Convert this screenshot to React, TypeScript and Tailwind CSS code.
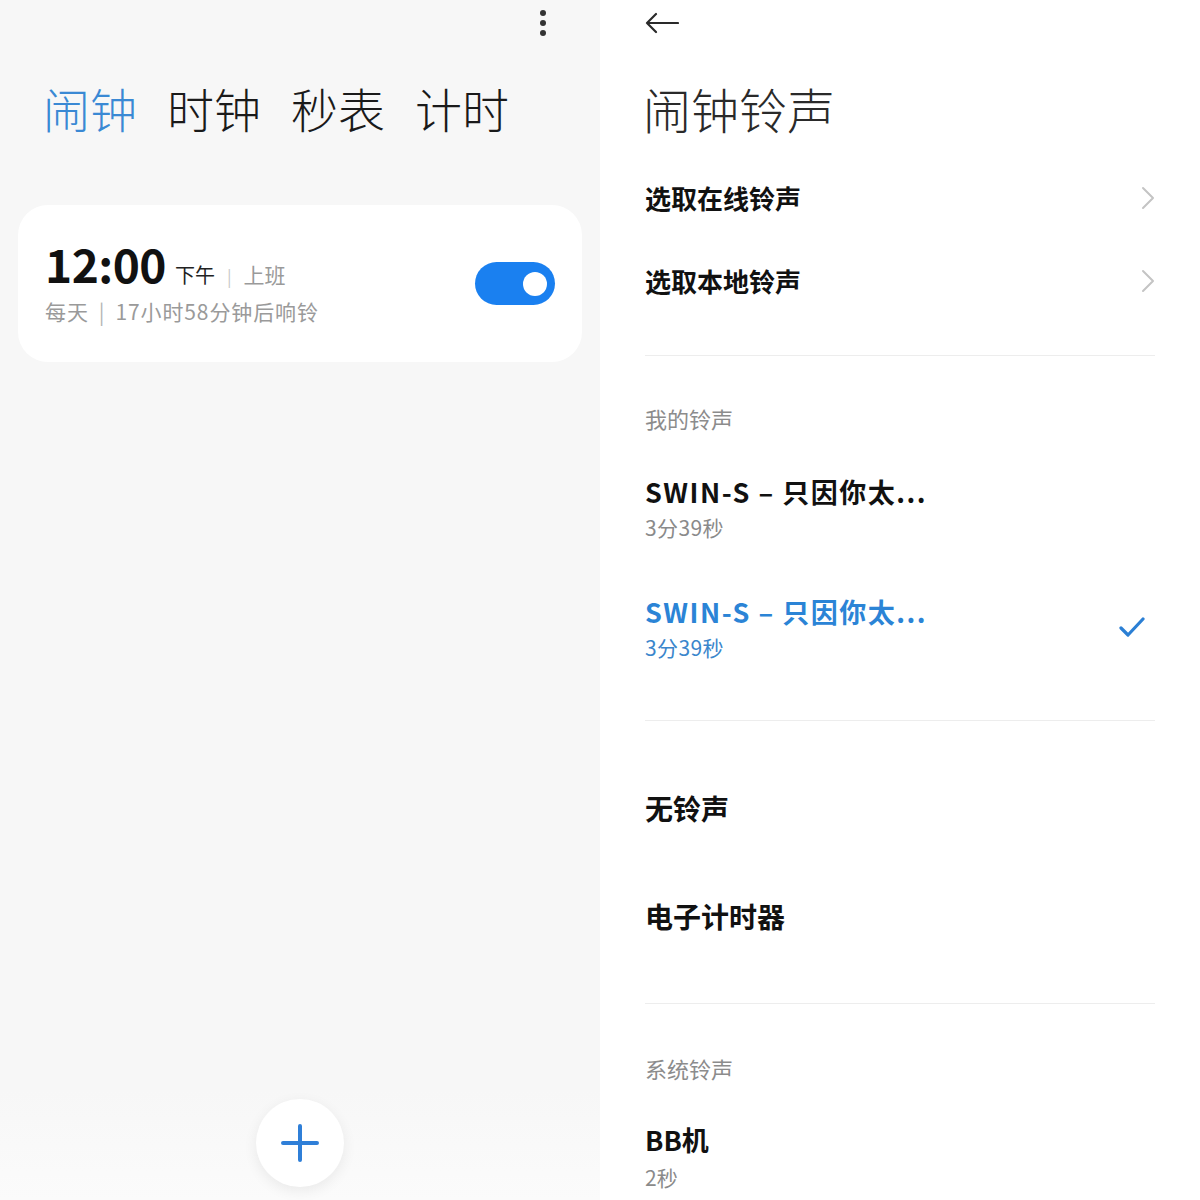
import React from "react";

const font = "font-['Noto_Sans_CJK_SC','Noto_Sans',sans-serif]";

type Ringtone = {
  title: string;
  sub?: string;
  selected?: boolean;
};

const Chevron = () => (
  <svg width="14" height="24" viewBox="0 0 14 24" fill="none">
    <path d="M2 2 L12 12 L2 22" stroke="#c4c4c4" strokeWidth="2" strokeLinecap="round" strokeLinejoin="round" />
  </svg>
);

const Check = () => (
  <svg width="26" height="22" viewBox="0 0 26 22" fill="none">
    <path d="M2 12 L9 19 L24 3" stroke="#2b7fd4" strokeWidth="3.2" strokeLinecap="round" strokeLinejoin="round" />
  </svg>
);

const AlarmPanel = () => {
  const tabs = ["闹钟", "时钟", "秒表", "计时"];
  return (
    <div className="relative w-[600px] h-[1200px] bg-[#f7f7f7] flex flex-col overflow-hidden">
      {/* barra superior */}
      <div className="h-[48px] flex justify-end pr-[53px] pt-[10px]">
        <div className="flex flex-col items-center gap-[4px] w-[8px]">
          <span className="w-[6px] h-[6px] rounded-full bg-[#333]" />
          <span className="w-[6px] h-[6px] rounded-full bg-[#333]" />
          <span className="w-[6px] h-[6px] rounded-full bg-[#333]" />
        </div>
      </div>

      {/* pestañas */}
      <div className="mt-[36px] pl-[43px] flex gap-[30px]">
        {tabs.map((t, i) => (
          <span
            key={t}
            className={`text-[47px] leading-[47px] font-light ${i === 0 ? "text-[#3a89d4]" : "text-[#1a1a1a]"}`}
          >
            {t}
          </span>
        ))}
      </div>

      {/* tarjeta de alarma */}
      <div className="mt-[74px] mx-[18px] h-[157px] rounded-[30px] bg-white flex items-center justify-between pl-[27px] pr-[27px]">
        <div className="flex flex-col pb-[4px]">
          <div className="flex items-baseline h-[48px]">
            <span className="text-[46px] leading-[48px] font-bold text-[#111] tracking-[-0.5px]">12:00</span>
            <span className="ml-[9px] text-[20px] leading-[24px] text-[#222]">下午</span>
            <span className="mx-[12px] text-[17px] leading-[24px] text-[#c8c8c8]">|</span>
            <span className="text-[21px] leading-[24px] text-[#9a9a9a]">上班</span>
          </div>
          <div className="text-[21px] leading-[28px] text-[#9a9a9a] mt-[10px] tracking-[0.9px]">
            每天<span className="mx-[10px] text-[#b5b5b5]">|</span>17小时58分钟后响铃
          </div>
        </div>
        <div className="w-[80px] h-[43px] rounded-full bg-[#1a80f0] flex items-center justify-end pr-[8px]">
          <span className="w-[24px] h-[24px] rounded-full bg-white" />
        </div>
      </div>

      {/* degradado inferior */}
      <div className="absolute left-0 right-0 bottom-0 h-[110px] bg-gradient-to-b from-[#f7f7f7] to-[#fbfbfb]" />

      {/* botón añadir */}
      <button className="absolute left-[256px] bottom-[13px] w-[88px] h-[88px] rounded-full bg-white shadow-[0_4px_14px_rgba(0,0,0,0.07)] flex items-center justify-center">
        <svg width="38" height="38" viewBox="0 0 38 38" fill="none">
          <path d="M19 2 V36 M2 19 H36" stroke="#2f7fd8" strokeWidth="4" strokeLinecap="round" />
        </svg>
      </button>
    </div>
  );
};

const SongItem: React.FC<Ringtone & { className?: string }> = ({ title, sub, selected, className }) => (
  <div className={`flex items-center justify-between ${className ?? ""}`}>
    <div className="flex flex-col">
      <div
        className={`h-[36px] leading-[36px] text-[27px] font-bold tracking-[1.5px] ${selected ? "text-[#2b84d6]" : "text-[#111]"}`}
      >
        {title}
      </div>
      {sub && (
        <div
          className={`mt-[4px] h-[26px] leading-[26px] text-[21px] tracking-[0.4px] ${selected ? "text-[#3a86cc]" : "text-[#8a8a8a]"}`}
        >
          {sub}
        </div>
      )}
    </div>
    {selected && (
      <div className="pr-[10px]">
        <Check />
      </div>
    )}
  </div>
);

const RingtonePanel = () => (
  <div className="w-[600px] h-[1200px] bg-white flex flex-col pl-[45px] pr-[45px] overflow-hidden">
    <div className="h-[46px] flex items-center">
      <svg width="34" height="22" viewBox="0 0 34 22" fill="none">
        <path d="M33 11 H2 M11 2 L2 11 L11 20" stroke="#2a2a2a" strokeWidth="2.2" strokeLinecap="round" strokeLinejoin="round" />
      </svg>
    </div>

    <h1 className="mt-[38px] h-[48px] leading-[48px] text-[48px] font-light text-[#2a2a2a] -ml-[2px]">闹钟铃声</h1>

    <div className="mt-[24px] h-[83px] flex items-center justify-between">
      <span className="text-[26px] font-bold text-[#111]">选取在线铃声</span>
      <Chevron />
    </div>
    <div className="h-[83px] flex items-center justify-between">
      <span className="text-[26px] font-bold text-[#111]">选取本地铃声</span>
      <Chevron />
    </div>

    <div className="mt-[33px] h-px bg-[#ededed]" />

    <div className="mt-[47px] h-[30px] leading-[30px] text-[22px] text-[#8c8c8c]">我的铃声</div>

    <SongItem className="mt-[41px]" title="SWIN-S – 只因你太..." sub="3分39秒" />
    <SongItem className="mt-[54px]" title="SWIN-S – 只因你太..." sub="3分39秒" selected />

    <div className="mt-[60px] h-px bg-[#ededed]" />

    <div className="mt-[69px] h-[36px] leading-[36px] text-[28px] font-bold text-[#111]">无铃声</div>
    <div className="mt-[72px] h-[36px] leading-[36px] text-[28px] font-bold text-[#111]">电子计时器</div>

    <div className="mt-[69px] h-px bg-[#ededed]" />

    <div className="mt-[49px] h-[30px] leading-[30px] text-[22px] text-[#8c8c8c]">系统铃声</div>

    <div className="mt-[39px] h-[36px] leading-[36px] text-[27px] font-bold text-[#111]">BB机</div>
    <div className="mt-[6px] h-[26px] leading-[26px] text-[21px] text-[#8a8a8a]">2秒</div>
  </div>
);

export default function App() {
  return (
    <div className={`w-[1200px] h-[1200px] flex ${font}`}>
      <AlarmPanel />
      <RingtonePanel />
    </div>
  );
}
